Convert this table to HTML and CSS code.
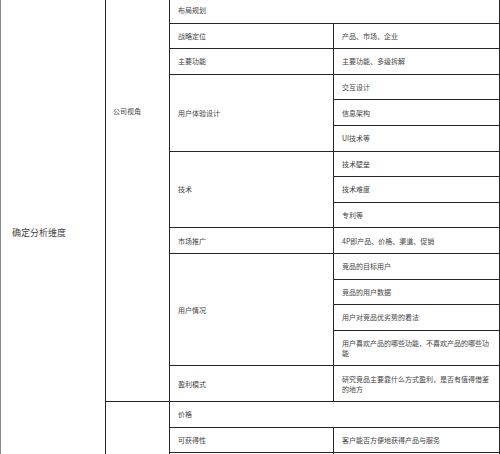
FILE: index.html
```html
<!DOCTYPE html>
<html lang="zh">
<head>
<meta charset="utf-8">
<title>确定分析维度</title>
<link rel="stylesheet" href="styles.css">
</head>
<body>
<div class="frame">
<table class="grid">
  <colgroup>
    <col class="c1"><col class="c2"><col class="c3"><col class="c4">
  </colgroup>
  <tbody>
    <tr>
      <td class="dim" rowspan="18">确定分析维度</td>
      <td class="view" rowspan="15">公司视角</td>
      <td colspan="2">布局规划</td>
    </tr>
    <tr><td>战略定位</td><td>产品、市场、企业</td></tr>
    <tr><td>主要功能</td><td>主要功能、多级拆解</td></tr>
    <tr><td rowspan="3">用户体验设计</td><td>交互设计</td></tr>
    <tr><td>信息架构</td></tr>
    <tr><td>UI技术等</td></tr>
    <tr><td rowspan="3">技术</td><td>技术壁垒</td></tr>
    <tr><td>技术难度</td></tr>
    <tr><td>专利等</td></tr>
    <tr><td>市场推广</td><td>4P即产品、价格、渠道、促销</td></tr>
    <tr><td rowspan="4">用户情况</td><td>竞品的目标用户</td></tr>
    <tr><td>竞品的用户数据</td></tr>
    <tr><td>用户对竞品优劣势的看法</td></tr>
    <tr><td>用户喜欢产品的哪些功能，不喜欢产品的哪些功能</td></tr>
    <tr><td>盈利模式</td><td>研究竞品主要靠什么方式盈利，是否有值得借鉴的地方</td></tr>
    <tr>
      <td class="view2" rowspan="3"></td>
      <td colspan="2">价格</td>
    </tr>
    <tr><td>可获得性</td><td>客户能否方便地获得产品与服务</td></tr>
    <tr><td></td><td></td></tr>
  </tbody>
</table>
</div>
</body>
</html>
```

FILE: styles.css
```css
html, body {
  margin: 0;
  padding: 0;
  background: #ffffff;
  overflow: hidden;
}

.frame {
  width: 500px;
  height: 454px;
  overflow: hidden;
}

.grid {
  border-collapse: collapse;
  table-layout: fixed;
  width: 499px;
  margin-top: -3px;
  font-family: "Noto Sans CJK SC", "Noto Sans", sans-serif;
  font-size: 7px;
  line-height: 10px;
  color: #444444;
}

.c1 { width: 105px; }
.c2 { width: 64px; }
.c3 { width: 164px; }
.c4 { width: 166px; }

.grid td {
  border: 1px solid #262626;
  padding: 7.3px 10px 7.3px 8px;
  vertical-align: middle;
  text-align: left;
  height: 10px;
}

.grid td.dim {
  border-left-color: #8a8a8a;
  vertical-align: top;
  padding: 229px 8px 0 11px;
  font-size: 9px;
  line-height: 12px;
}

.grid td.view {
  vertical-align: top;
  padding: 108px 6px 0 7px;
}

.grid td.view2 {
  padding: 0;
}
```
